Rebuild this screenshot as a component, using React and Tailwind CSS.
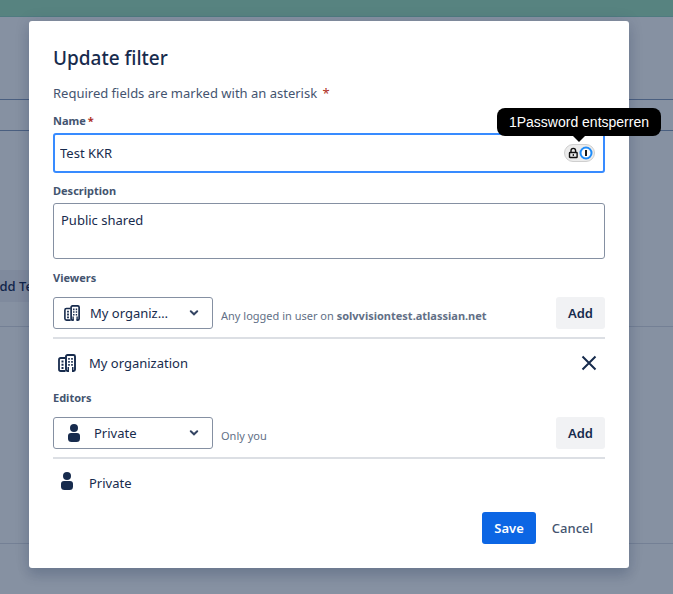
import React, { useState } from 'react';

const OfficeIcon = ({ className }) => (
  <svg viewBox="0 0 18 18" className={className} fill="none" aria-hidden="true">
    <path d="M7.5 4H2.8Q1 4 1 5.8V15.2Q1 17 2.8 17H7.5" stroke="currentColor" strokeWidth="1.8" />
    <rect x="8" y="1" width="9" height="16" rx="1.5" stroke="currentColor" strokeWidth="1.9" />
    <path
      d="M3.5 6.5h2v2h-2zM3.5 9.7h2v2h-2zM3.5 12.9h2v2h-2zM10.2 4h1.6v1.8h-1.6zM13.2 4h1.6v1.8h-1.6zM10.2 7h1.6v1.8h-1.6zM13.2 7h1.6v1.8h-1.6zM10.2 10h1.6v1.8h-1.6zM13.2 10h1.6v1.8h-1.6z"
      fill="currentColor"
    />
    <path d="M11 13.2h3V18h-3z" fill="#fff" />
    <path d="M9.5 13h1.5v4H9.5zM14 13h1.5v4H14z" fill="currentColor" />
  </svg>
);

const PersonIcon = ({ className }) => (
  <svg viewBox="0 0 12 18" className={className} fill="currentColor" aria-hidden="true">
    <circle cx="6" cy="4" r="4" />
    <path d="M0 12q0-3 3-3h6q3 0 3 3v2.5Q12 18 8.5 18h-5Q0 18 0 14.5z" />
  </svg>
);

const Chevron = () => (
  <svg viewBox="0 0 10 6" className="h-[6px] w-[10px] shrink-0" fill="none" aria-hidden="true">
    <path d="M1.8 1.3 5 4.3l3.2-3" stroke="#344563" strokeWidth="2" strokeLinecap="round" />
  </svg>
);

const PasswordBadge = () => (
  <button
    type="button"
    aria-label="1Password"
    className="flex h-[18px] w-[31px] shrink-0 items-center justify-center rounded-full border border-[#cfcfcf] bg-[#ececec]"
  >
    <svg viewBox="0 0 26 14" className="h-[14px] w-[26px] shrink-0" fill="none" aria-hidden="true">
      <path d="M4 6V4.7a2.3 2.3 0 0 1 4.6 0V6" stroke="#111" strokeWidth="1.4" />
      <rect x="2.5" y="6.5" width="7.6" height="5" rx="0.6" stroke="#111" strokeWidth="1.4" />
      <path d="M6.3 8v2" stroke="#111" strokeWidth="1.2" />
      <circle cx="19" cy="7" r="5.5" fill="#fff" stroke="#1f8cf9" strokeWidth="2" />
      <path d="M19 4v6" stroke="#1a1a1a" strokeWidth="2" />
    </svg>
  </button>
);

const ShareSection = ({ id, label, value, icon, hint, children }) => (
  <section>
    <label htmlFor={id} className="block text-[11px] leading-4 font-bold text-[#44546f]">
      {label}
    </label>
    <div className="mt-[11px] flex h-8 items-center">
      <div className="flex h-8 w-40 shrink-0 items-center rounded-[3px] border border-[#8590a2] pr-[13px] pl-2">
        {icon}
        <select
          id={id}
          defaultValue={value}
          className="mr-4 ml-2 min-w-0 flex-1 appearance-none truncate bg-transparent text-[13px] leading-5 outline-none"
        >
          <option>{value}</option>
        </select>
        <Chevron />
      </div>
      <p className="mt-[6px] ml-2 min-w-0 flex-1 text-[11px] leading-4 text-[#626f86]">{hint}</p>
      <button type="button" className="h-8 shrink-0 rounded-[3px] bg-[#f1f2f4] px-3 pt-px text-[13px] font-semibold">
        Add
      </button>
    </div>
    <div className="mt-2 border-t-2 border-[#dcdfe4]">{children}</div>
  </section>
);

const PageBackdrop = () => (
  <div className="min-h-screen bg-[#8691a2]" aria-hidden="true">
    <div className="h-[17px] border-b border-[#4f7b80] bg-[#578380]" />
    <div className="mt-[82px] h-8 border-y border-[#4a5f80]" />
    <div className="mt-[139px] border-b border-[#748095] pb-6">
      <div className="-ml-3 h-8 w-24 bg-[#7f8a9d] pl-[3px] text-[13px] leading-8 font-medium whitespace-nowrap text-[#10244a]">
        Add Team
      </div>
    </div>
    <div className="h-[217px] border-b border-[#748095]" />
  </div>
);

const App = () => {
  const [name, setName] = useState('Test KKR');
  const [description, setDescription] = useState('Public shared');

  return (
    <div className="relative overflow-hidden font-['Noto_Sans',sans-serif] text-[#172b4d]">
      <PageBackdrop />
      <div className="absolute inset-0 flex items-start justify-center pt-[21px] pr-[15px]">
        <form
          role="dialog"
          aria-labelledby="dialog-title"
          onSubmit={(e) => e.preventDefault()}
          className="w-full max-w-[600px] rounded-[3px] bg-white p-6 shadow-[0_8px_12px_rgba(9,30,66,0.15),0_0_16px_rgba(9,30,66,0.1)]"
        >
          <h1 id="dialog-title" className="mt-px text-[19px] leading-6 font-medium">
            Update filter
          </h1>
          <p className="mt-[13px] text-[13px] leading-5 text-[#44546f]">
            Required fields are marked with an asterisk <span className="ml-[2px] text-[#ae2e24]">*</span>
          </p>

          <label htmlFor="name" className="mt-[10px] block text-[11px] leading-4 font-bold text-[#44546f]">
            Name<span className="ml-[2px] text-[#ae2e24]">*</span>
          </label>
          <div className="relative mt-1 flex h-10 items-center rounded-[3px] border-2 border-[#388bff] pr-2 pl-[5px]">
            <input
              id="name"
              value={name}
              onChange={(e) => setName(e.target.value)}
              className="min-w-0 flex-1 bg-transparent text-[13px] leading-5 outline-none"
            />
            <PasswordBadge />
            <div
              role="tooltip"
              className="absolute -right-[58px] bottom-[35px] rounded-lg bg-black px-3 py-1 font-['Liberation_Sans',Arial,sans-serif] text-[14px] leading-5 whitespace-nowrap text-white"
            >
              1Password entsperren
              <span className="absolute top-full left-1/2 h-0 w-0 -translate-x-1/2 border-x-[6px] border-t-[6px] border-x-transparent border-t-black" />
            </div>
          </div>

          <label htmlFor="description" className="mt-[10px] block text-[11px] leading-4 font-bold text-[#44546f]">
            Description
          </label>
          <textarea
            id="description"
            value={description}
            onChange={(e) => setDescription(e.target.value)}
            className="mt-1 mb-[11px] block h-14 w-full resize-none rounded-[3px] border border-[#8590a2] px-[7px] py-[6px] text-[13px] leading-5 outline-none"
          />

          <ShareSection
            id="viewers"
            label="Viewers"
            value="My organization"
            icon={<OfficeIcon className="mr-[2px] ml-[2px] h-4 w-4 shrink-0" />}
            hint={
              <>
                Any logged in user on <strong className="font-bold">solvvisiontest.atlassian.net</strong>
              </>
            }
          >
            <div className="flex h-12 items-center pr-2 pl-[5px] text-[13px]">
              <OfficeIcon className="h-[18px] w-[18px]" />
              <span className="ml-[13px] flex-1 pt-px">My organization</span>
              <button type="button" aria-label="Remove">
                <svg viewBox="0 0 16 16" className="h-4 w-4" fill="none">
                  <path d="M1.5 1.5l13 13M14.5 1.5l-13 13" stroke="#172b4d" strokeWidth="2" />
                </svg>
              </button>
            </div>
          </ShareSection>

          <div className="mt-[3px]">
            <ShareSection
              id="editors"
              label="Editors"
              value="Private"
              icon={<PersonIcon className="mx-[6px] h-[18px] w-3 shrink-0" />}
              hint="Only you"
            >
              <div className="flex h-12 items-center pl-2 text-[13px]">
                <PersonIcon className="mb-1 h-[18px] w-3" />
                <span className="ml-4 pt-px">Private</span>
              </div>
            </ShareSection>
          </div>

          <div className="mt-[5px] flex justify-end gap-1 text-[13px]">
            <button type="submit" className="h-8 rounded-[3px] bg-[#0c66e4] px-3 pt-px font-semibold text-white">
              Save
            </button>
            <button type="button" className="h-8 px-3 pt-px font-medium text-[#44546f]">
              Cancel
            </button>
          </div>
        </form>
      </div>
    </div>
  );
};

export default App;
